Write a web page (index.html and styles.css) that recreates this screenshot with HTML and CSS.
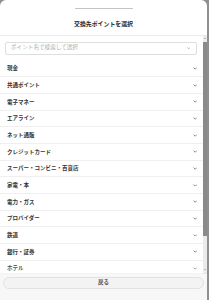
FILE: index.html
```html
<!DOCTYPE html>
<html lang="ja">
<head>
<meta charset="utf-8">
<title>交換先ポイントを選択</title>
<link rel="stylesheet" href="styles.css">
</head>
<body>
<div class="sheet">
  <header class="sheet-head">
    <div class="handle"></div>
    <h1 class="title">交換先ポイントを選択</h1>
  </header>
  <div class="sheet-body">
    <div class="scroll">
      <div class="search">
        <span class="placeholder">ポイント名で検索して選択</span>
        <svg class="search-chev" viewBox="0 0 8 5" width="3.5" height="2.2"><path d="M1 1l3 3 3-3" fill="none" stroke="#8a8a8a" stroke-width="1.4"/></svg>
      </div>
      <ul class="cats">
        <li class="cat"><span>現金</span><svg class="chev" viewBox="0 0 8 5" width="4.4" height="2.8"><path d="M1 1l3 3 3-3" fill="none" stroke="#5a5a5a" stroke-width="1.3"/></svg></li>
        <li class="cat"><span>共通ポイント</span><svg class="chev" viewBox="0 0 8 5" width="4.4" height="2.8"><path d="M1 1l3 3 3-3" fill="none" stroke="#5a5a5a" stroke-width="1.3"/></svg></li>
        <li class="cat"><span>電子マネー</span><svg class="chev" viewBox="0 0 8 5" width="4.4" height="2.8"><path d="M1 1l3 3 3-3" fill="none" stroke="#5a5a5a" stroke-width="1.3"/></svg></li>
        <li class="cat"><span>エアライン</span><svg class="chev" viewBox="0 0 8 5" width="4.4" height="2.8"><path d="M1 1l3 3 3-3" fill="none" stroke="#5a5a5a" stroke-width="1.3"/></svg></li>
        <li class="cat"><span>ネット通販</span><svg class="chev" viewBox="0 0 8 5" width="4.4" height="2.8"><path d="M1 1l3 3 3-3" fill="none" stroke="#5a5a5a" stroke-width="1.3"/></svg></li>
        <li class="cat"><span>クレジットカード</span><svg class="chev" viewBox="0 0 8 5" width="4.4" height="2.8"><path d="M1 1l3 3 3-3" fill="none" stroke="#5a5a5a" stroke-width="1.3"/></svg></li>
        <li class="cat"><span>スーパー・コンビニ・百貨店</span><svg class="chev" viewBox="0 0 8 5" width="4.4" height="2.8"><path d="M1 1l3 3 3-3" fill="none" stroke="#5a5a5a" stroke-width="1.3"/></svg></li>
        <li class="cat"><span>家電・本</span><svg class="chev" viewBox="0 0 8 5" width="4.4" height="2.8"><path d="M1 1l3 3 3-3" fill="none" stroke="#5a5a5a" stroke-width="1.3"/></svg></li>
        <li class="cat"><span>電力・ガス</span><svg class="chev" viewBox="0 0 8 5" width="4.4" height="2.8"><path d="M1 1l3 3 3-3" fill="none" stroke="#5a5a5a" stroke-width="1.3"/></svg></li>
        <li class="cat"><span>プロバイダー</span><svg class="chev" viewBox="0 0 8 5" width="4.4" height="2.8"><path d="M1 1l3 3 3-3" fill="none" stroke="#5a5a5a" stroke-width="1.3"/></svg></li>
        <li class="cat"><span>鉄道</span><svg class="chev" viewBox="0 0 8 5" width="4.4" height="2.8"><path d="M1 1l3 3 3-3" fill="none" stroke="#5a5a5a" stroke-width="1.3"/></svg></li>
        <li class="cat"><span>銀行・証券</span><svg class="chev" viewBox="0 0 8 5" width="4.4" height="2.8"><path d="M1 1l3 3 3-3" fill="none" stroke="#5a5a5a" stroke-width="1.3"/></svg></li>
        <li class="cat"><span>ホテル</span><svg class="chev" viewBox="0 0 8 5" width="4.4" height="2.8"><path d="M1 1l3 3 3-3" fill="none" stroke="#5a5a5a" stroke-width="1.3"/></svg></li>
      </ul>
    </div>
    <div class="rail" aria-hidden="true">
      <span class="arrow arrow-up"></span>
      <span class="thumb"></span>
      <span class="arrow arrow-down"></span>
    </div>
  </div>
  <footer class="sheet-foot">
    <button class="back" type="button">戻る</button>
  </footer>
</div>
</body>
</html>
```

FILE: styles.css
```css
html, body {
  margin: 0;
  padding: 0;
  height: 100%;
}
body {
  background: #8f8f8f;
  font-family: "Noto Sans CJK JP", "Noto Sans", sans-serif;
  color: #333;
  overflow: hidden;
}
.sheet {
  width: 207px;
  height: 300px;
  background: #fff;
  border-radius: 6px 6px 0 0;
  display: flex;
  flex-direction: column;
  overflow: hidden;
}
.sheet-head {
  flex: none;
  height: 36px;
  box-sizing: border-box;
  border-bottom: 1px solid #ececec;
  display: flex;
  flex-direction: column;
  align-items: center;
  padding-top: 8px;
}
.handle {
  width: 58px;
  height: 1px;
  background: #c4c4c4;
  border-radius: 1px;
}
.title {
  margin: 10px 0 0;
  font-size: 5.9px;
  line-height: 9px;
  font-weight: 700;
  color: #2a2a2a;
}
.sheet-body {
  flex: 1;
  min-height: 0;
  display: flex;
}
.scroll {
  flex: 1;
  min-width: 0;
  overflow-y: auto;
  scrollbar-width: none;
  padding: 5.5px 0 32px;
  box-sizing: border-box;
}
.scroll::-webkit-scrollbar {
  display: none;
}
.rail {
  flex: 0 0 4px;
  width: 4px;
  background: #ebebeb;
  display: flex;
  flex-direction: column;
  align-items: center;
  padding: 1.5px 0 2.5px;
  box-sizing: border-box;
}
.arrow {
  flex: none;
  width: 0;
  height: 0;
  border-left: 1.3px solid transparent;
  border-right: 1.3px solid transparent;
}
.arrow-up {
  border-bottom: 1.6px solid #8c8c8c;
}
.arrow-down {
  margin-top: auto;
  border-top: 1.6px solid #8c8c8c;
}
.thumb {
  flex: none;
  margin-top: 3.9px;
  width: 3.5px;
  height: 194px;
  background: #8a8a8a;
  border-radius: 0.5px;
}
.search {
  margin: 0 6px 0 5px;
  height: 13px;
  box-sizing: border-box;
  border: 1px solid #dedede;
  border-radius: 2px;
  display: flex;
  align-items: center;
  justify-content: space-between;
  padding: 0 6px 0 5px;
}
.placeholder {
  font-size: 5.6px;
  line-height: 1;
  color: #b0b0b0;
}
.search-chev {
  display: block;
}
.cats {
  list-style: none;
  margin: 6.17px 0 0;
  padding: 0;
}
.cat {
  height: 16.67px;
  box-sizing: border-box;
  border-bottom: 1px solid #efefef;
  display: flex;
  align-items: center;
  justify-content: space-between;
  padding: 0 6px 0 7px;
  font-size: 5.5px;
  font-weight: 700;
  color: #333;
}
.chev {
  display: block;
}
.sheet-foot {
  flex: none;
  position: relative;
  height: 27.5px;
  box-sizing: border-box;
  border-top: 1px solid #e6e6e6;
  background: #f7f7f7;
  padding: 3px 3px 0;
}
.sheet-foot::before {
  content: "";
  position: absolute;
  left: 0;
  right: 4px;
  bottom: 100%;
  height: 9px;
  background: linear-gradient(rgba(255,255,255,0), rgba(255,255,255,0.55));
  pointer-events: none;
}
.back {
  display: block;
  width: 100%;
  height: 12.5px;
  box-sizing: border-box;
  border: 1px solid #e2e2e2;
  border-radius: 6px;
  background: #f3f3f3;
  font-family: inherit;
  font-size: 5.5px;
  font-weight: 700;
  color: #555;
  padding: 0;
  line-height: 1;
}
```
